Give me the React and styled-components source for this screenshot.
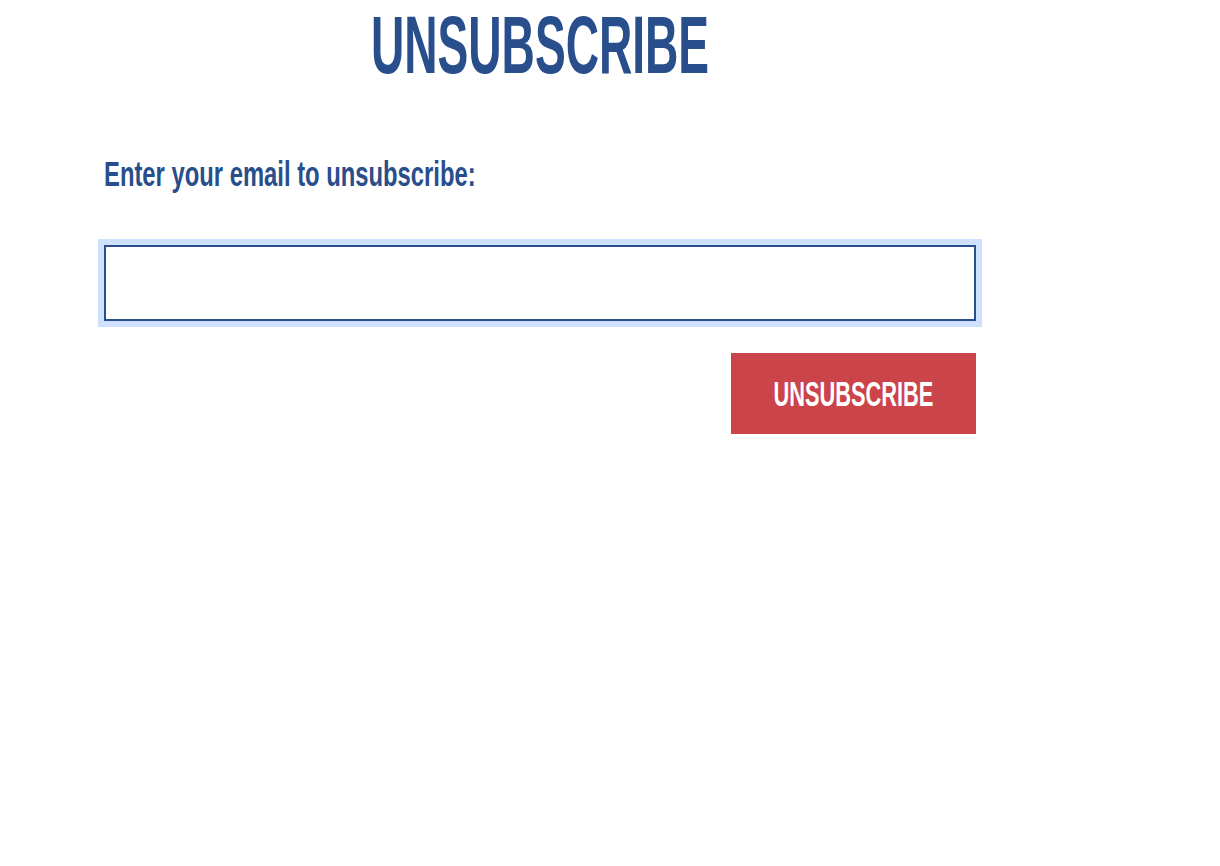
import React, { useLayoutEffect, useRef, useState } from 'react';
import styled, { createGlobalStyle } from 'styled-components';

const blue = '#284e8b';
const red = '#cb444a';

const GlobalStyle = createGlobalStyle`
  html, body {
    margin: 0;
    padding: 0;
    background: #ffffff;
  }
  body {
    font-family: "Liberation Sans", Arial, sans-serif;
  }
`;

const Page = styled.div`
  width: 872px;
  padding-left: 104px;
`;

const Title = styled.h1`
  margin: 0;
  font-size: 81px;
  line-height: 91px;
  font-weight: 700;
  color: ${blue};
  text-align: center;
`;

const Form = styled.form`
  display: flex;
  flex-direction: column;
  margin-top: 63px;
`;

const Label = styled.label`
  font-size: 35px;
  line-height: 40px;
  font-weight: 700;
  color: ${blue};
`;

const EmailInput = styled.input`
  box-sizing: border-box;
  width: 872px;
  height: 76px;
  margin-top: 51px;
  border: 2px solid ${blue};
  border-radius: 0;
  box-shadow: 0 0 0 6px #cde0fd;
  outline: none;
  padding: 0 16px;
  font-size: 22px;
  font-family: "Liberation Sans", Arial, sans-serif;
`;

const Actions = styled.div`
  display: flex;
  justify-content: flex-end;
  margin-top: 32px;
`;

const Button = styled.button`
  width: 245px;
  height: 81px;
  border: none;
  border-radius: 0;
  background: ${red};
  color: #ffffff;
  font-family: "Liberation Sans", Arial, sans-serif;
  font-size: 35px;
  line-height: 40px;
  font-weight: 700;
  padding: 0;
  cursor: pointer;
  display: flex;
  align-items: center;
  justify-content: center;
`;

const Squeeze = styled.span`
  display: inline-block;
  white-space: nowrap;
  transform-origin: ${(p) => p.$origin};
`;

// squeezes the text to the width of the condensed display face
function Condensed({ width, origin = 'center', children }) {
  const ref = useRef(null);
  const [scale, setScale] = useState(1);

  useLayoutEffect(() => {
    const measure = () => {
      if (ref.current && ref.current.offsetWidth) {
        setScale(width / ref.current.offsetWidth);
      }
    };
    measure();
    if (document.fonts) document.fonts.ready.then(measure);
  }, [width]);

  return (
    <Squeeze ref={ref} $origin={origin} style={{ transform: `scaleX(${scale})` }}>
      {children}
    </Squeeze>
  );
}

export default function App() {
  return (
    <>
      <GlobalStyle />
      <Page>
        <Title>
          <Condensed width={338}>UNSUBSCRIBE</Condensed>
        </Title>
        <Form onSubmit={(e) => e.preventDefault()}>
          <Label htmlFor="email">
            <Condensed width={372} origin="left">Enter your email to unsubscribe:</Condensed>
          </Label>
          <EmailInput id="email" type="email" />
          <Actions>
            <Button type="submit">
              <Condensed width={160}>UNSUBSCRIBE</Condensed>
            </Button>
          </Actions>
        </Form>
      </Page>
    </>
  );
}
